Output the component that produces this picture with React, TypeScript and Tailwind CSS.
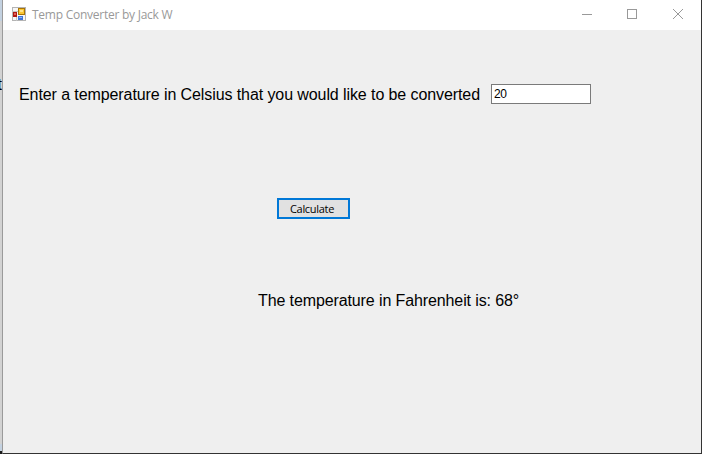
import React from "react";

function AppIcon() {
  return (
    <svg width="14" height="14" viewBox="0 0 14 14" shapeRendering="crispEdges" className="mb-[2px] shrink-0">
      <rect x="0.5" y="0.5" width="13" height="13" fill="#f6f6f6" stroke="#b4b4b4" />
      <path d="M0 4.5H6M4.5 9V14" stroke="#c4c4c4" fill="none" />
      <rect x="1" y="5" width="4" height="5" fill="#b01812" />
      <rect x="2" y="6" width="2" height="2" fill="#e0605a" />
      <rect x="6" y="1" width="7" height="7" fill="#a87408" />
      <rect x="7" y="2" width="5" height="5" fill="#fbc632" />
      <rect x="8" y="3" width="3" height="2" fill="#ffe48c" />
      <rect x="6" y="9" width="5" height="4" fill="#3e74d8" />
      <rect x="7" y="10" width="3" height="1" fill="#8eb4f5" />
    </svg>
  );
}

function TitleBar() {
  return (
    <header className="flex h-[30px] items-center bg-white pl-[9px] text-[#999999]">
      <AppIcon />
      <span className="ml-[6px] grow whitespace-nowrap font-['Open_Sans','Noto_Sans',sans-serif] text-[12px] leading-[16px] tracking-[-0.25px]">
        Temp Converter by Jack W
      </span>
      <svg width="138" height="30" viewBox="0 0 138 30" fill="none" stroke="#999999">
        <path d="M19 14.5H29" />
        <rect x="64.5" y="9.5" width="9" height="9" />
        <path d="M110 9L120 19M120 9L110 19" />
      </svg>
    </header>
  );
}

export default function App() {
  return (
    <div className="flex h-[454px] w-[702px] overflow-hidden bg-[#efefef] font-['Liberation_Sans',Arial,sans-serif] text-black">
      <div className="flex w-[2px] shrink-0 flex-col bg-[#d2d2d2]">
        <div className="h-[21px] bg-[#c3d1e0]" />
        <div className="mt-[56px] flex h-[16px] w-[2px] justify-end text-[16px] leading-[16px]">
          <span>t</span>
        </div>
        <div className="mt-auto h-[7px] bg-[#c3d1e0]" />
        <div className="h-[3px] bg-[#1a1a1a]" />
      </div>
      <main className="flex w-[700px] flex-col border-b border-l border-r border-b-[#333333] border-l-[#9a9a9a] border-r-[#333333]">
        <TitleBar />
        <div className="mt-[54px] flex h-5 items-center pl-4">
          <label className="w-[472px] whitespace-nowrap pt-[2px] text-[16px] leading-5 tracking-[-0.09px]">
            Enter a temperature in Celsius that you would like to be converted
          </label>
          <input
            className="h-5 w-[100px] border border-[#7a7a7a] bg-white px-[2px] text-[12px] tracking-[-0.3px] outline-none"
            defaultValue="20"
          />
        </div>
        <button className="ml-[274px] mt-[94px] h-[21px] w-[73px] border-2 border-[#0078d7] bg-[#e1e1e1] pr-[3px] font-['Open_Sans','Noto_Sans',sans-serif] text-[11px] leading-[17px] tracking-[-0.3px]">
          Calculate
        </button>
        <p className="ml-[255px] mt-[72px] whitespace-nowrap text-[16px] leading-5 tracking-[-0.11px]">
          The temperature in Fahrenheit is: 68°
        </p>
      </main>
    </div>
  );
}
